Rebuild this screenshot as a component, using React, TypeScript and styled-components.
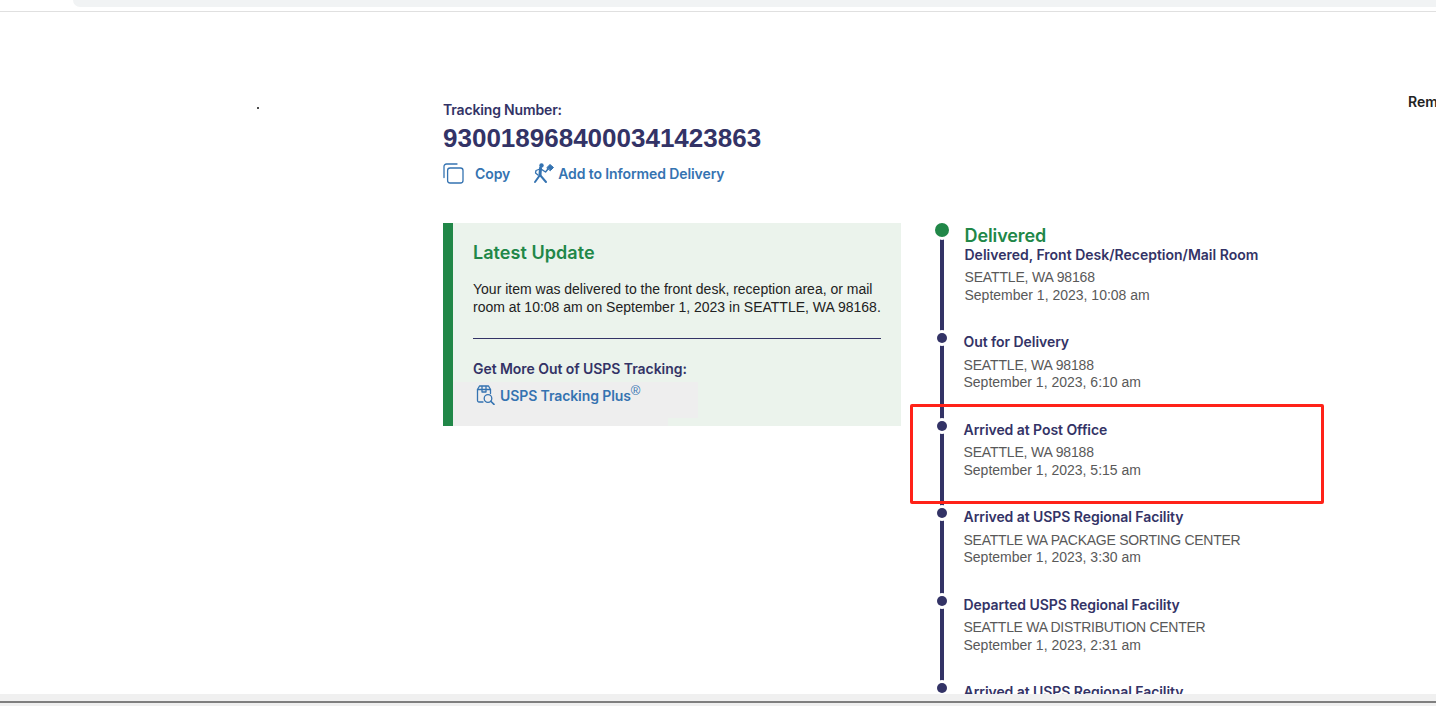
import React from "react";
import styled, { createGlobalStyle } from "styled-components";

const Global = createGlobalStyle`
  html, body { margin: 0; padding: 0; background: #fff; }
  #root { height: 706px; }
`;

const Page = styled.div`
  position: relative;
  width: 1436px;
  height: 706px;
  overflow: hidden;
  background: #fff;
  font-family: "Liberation Sans", Arial, sans-serif;
  color: #333366;
`;

const BrowserStrip = styled.div`
  height: 11px;
  border-bottom: 1px solid #e0e0e0;
  padding-left: 73px;
`;

const AddressBar = styled.div`
  height: 7px;
  background: #f1f3f4;
  border-bottom-left-radius: 12px;
`;

const Content = styled.main`
  display: flex;
  padding: 90px 0 0 443px;
`;

const Column = styled.div`
  width: 458px;
  flex: none;
`;

const Label = styled.div`
  font-family: Inter, sans-serif;
  font-size: 14px;
  font-weight: 600;
  line-height: 16px;
  letter-spacing: -0.16px;
`;

const TrackingNumber = styled.h1`
  margin: 5px 0 0;
  font-family: "Liberation Sans", sans-serif;
  font-size: 26px;
  line-height: 30px;
  font-weight: 700;
`;

const Actions = styled.div`
  display: flex;
  align-items: center;
  margin-top: 8px;
  height: 24px;
`;

const ActionLink = styled.a<{ $gap: number; $mr?: number }>`
  display: flex;
  align-items: center;
  gap: ${(p) => p.$gap}px;
  margin-right: ${(p) => p.$mr ?? 0}px;
  font-family: Inter, sans-serif;
  font-size: 14px;
  font-weight: 600;
  color: #3573b1;
  letter-spacing: -0.1px;
`;

const Update = styled.section`
  margin-top: 38px;
  height: 203px;
  box-sizing: border-box;
  background: #ebf3ec;
  border-left: 10px solid #218748;
  padding: 18px 20px 0 20px;
`;

const UpdateTitle = styled.h2`
  margin: 0;
  font-family: Inter, sans-serif;
  font-size: 18px;
  line-height: 24px;
  font-weight: 600;
  color: #218748;
  letter-spacing: 0.05px;
`;

const UpdateText = styled.p`
  margin: 15px 0 0;
  font-size: 14px;
  line-height: 18px;
  color: #222;
`;

const Rule = styled.hr`
  margin: 22px 0 0;
  border: 0;
  border-top: 1px solid #333366;
`;

const MoreLabel = styled(Label)`
  margin-top: 21px;
  line-height: 18px;
  letter-spacing: -0.06px;
`;

const PlusBox = styled.div`
  position: relative;
  display: flex;
  align-items: flex-start;
  gap: 4px;
  margin: 4px 0 0 -20px;
  padding: 3px 0 0 23px;
  width: 222px;
  height: 33px;
  background: #eeeeee;
  &::after {
    content: "";
    position: absolute;
    left: 0;
    top: 36px;
    width: 215px;
    height: 8px;
    background: #eeeeee;
  }
`;

const PlusLink = styled(ActionLink)`
  line-height: 20px;
  margin-top: 1px;
  sup {
    font-family: "Liberation Sans", sans-serif;
    font-size: 13px;
    font-weight: 400;
    line-height: 0;
  }
`;

const Timeline = styled.div`
  width: 390px;
  margin: 121px 0 0 32.5px;
  flex: none;
`;

const Step = styled.div<{ $h: number; $first?: boolean }>`
  position: relative;
  height: ${(p) => p.$h}px;
  box-sizing: border-box;
  padding-left: ${(p) => (p.$first ? 31 : 30)}px;
  padding-top: ${(p) => (p.$first ? 2 : 0)}px;
  &::before {
    content: "";
    position: absolute;
    left: 6.5px;
    top: 0;
    bottom: 0;
    width: 4px;
    background: #333366;
  }
`;

const Dot = styled.span<{ $big?: boolean }>`
  position: absolute;
  left: ${(p) => (p.$big ? 1.5 : 3.5)}px;
  top: 0;
  width: ${(p) => (p.$big ? 14 : 10)}px;
  height: ${(p) => (p.$big ? 14 : 10)}px;
  border-radius: 50%;
  background: ${(p) => (p.$big ? "#218748" : "#333366")};
  box-shadow: 0 0 0 3px #fff;
`;

const Status = styled.div`
  font-family: Inter, sans-serif;
  font-size: 18px;
  line-height: 22px;
  font-weight: 600;
  color: #218748;
  letter-spacing: -0.1px;
`;

const StepTitle = styled.div<{ $mt?: number; $ls?: number }>`
  font-family: Inter, sans-serif;
  font-size: 14px;
  font-weight: 600;
  line-height: 18px;
  letter-spacing: ${(p) => p.$ls ?? -0.06}px;
  margin-top: ${(p) => p.$mt ?? 0}px;
`;

const Detail = styled.div<{ $mt?: number; $ls?: number }>`
  font-size: 14px;
  line-height: 18px;
  color: #595959;
  margin-top: ${(p) => p.$mt ?? 0}px;
  letter-spacing: ${(p) => p.$ls ?? 0}px;
`;

const Cut = styled.div`
  position: absolute;
  left: 1408px;
  top: 93px;
  font-family: Inter, sans-serif;
  font-size: 14px;
  font-weight: 600;
  line-height: 18px;
  color: #222;
`;

const Speck = styled.span`
  position: absolute;
  left: 257px;
  top: 107px;
  width: 2px;
  height: 2px;
  border-radius: 50%;
  background: #111;
`;

const RedBox = styled.div`
  position: absolute;
  left: 910px;
  top: 404px;
  width: 414px;
  height: 100px;
  box-sizing: border-box;
  border: 3px solid #ff2218;
  border-radius: 2px;
`;

const BottomBar = styled.div`
  position: absolute;
  left: 0;
  right: 0;
  bottom: 0;
  height: 12px;
  background: #f0f0f0;
  &::after {
    content: "";
    position: absolute;
    left: 0;
    right: 0;
    top: 7px;
    height: 2px;
    background: #7f7f7f;
  }
`;

const CopyIcon = () => (
  <svg width="21" height="21" viewBox="0 0 21 21" fill="none" stroke="#3573b1" strokeWidth="1.3">
    <path d="M1 14.5 V3.5 a2.5 2.5 0 0 1 2.5-2.5 H14" strokeLinecap="round" />
    <rect x="4.6" y="5" width="15.4" height="15" rx="2.5" />
  </svg>
);

const RunnerIcon = () => (
  <svg width="21" height="21" viewBox="0 0 21 21" fill="none" stroke="#3573b1" strokeLinecap="round" strokeLinejoin="round">
    <circle cx="8.5" cy="2.4" r="2.2" fill="#3573b1" stroke="none" />
    <path d="M7.5 5 L7 12" strokeWidth="3" />
    <path d="M7 12 L2 19 M7 12 L13 19" strokeWidth="2" />
    <path d="M7 6 L3 7.5 L2.5 10 L5 12" strokeWidth="1.3" />
    <path d="M8 6 L12.5 9 L15 6" strokeWidth="1.5" />
    <path d="M14 4.5 L17 1.5 L20.5 4.5 L17.5 7.5 Z" fill="#3573b1" strokeWidth="1" />
  </svg>
);

const PlusIcon = () => (
  <svg width="20" height="20" viewBox="0 0 20 20" fill="none" stroke="#3573b1" strokeWidth="1.3" strokeLinecap="round" strokeLinejoin="round">
    <path d="M7 17 H3 a1.5 1.5 0 0 1-1.5-1.5 V4.5 L3.5 1 H12.5 L14.5 4.5 V8.5" />
    <path d="M1.5 4.5 H14.5 M6 1.5 V7 H10 V1.5" />
    <circle cx="12" cy="13.5" r="3.8" />
    <path d="M14.8 16.3 L18 19.4" strokeWidth="1.6" />
  </svg>
);

type StepData = { h: number; title: string; a?: string; b?: string; mt?: number; bmt?: number; ls?: number };

const steps: StepData[] = [
  { h: 88, title: "Out for Delivery", a: "SEATTLE, WA 98188", b: "September 1, 2023, 6:10 am", mt: 5, bmt: -1, ls: -0.16 },
  { h: 87, title: "Arrived at Post Office", a: "SEATTLE, WA 98188", b: "September 1, 2023, 5:15 am", mt: 4, ls: -0.16 },
  { h: 88, title: "Arrived at USPS Regional Facility", a: "SEATTLE WA PACKAGE SORTING CENTER", b: "September 1, 2023, 3:30 am", mt: 5, bmt: -1, ls: -0.27 },
  { h: 87, title: "Departed USPS Regional Facility", a: "SEATTLE WA DISTRIBUTION CENTER", b: "September 1, 2023, 2:31 am", mt: 4, ls: -0.29 },
  { h: 40, title: "Arrived at USPS Regional Facility" },
];

export default function App() {
  return (
    <Page>
      <Global />
      <BrowserStrip>
        <AddressBar />
      </BrowserStrip>
      <Content>
        <Column>
          <Label>Tracking Number:</Label>
          <TrackingNumber>9300189684000341423863</TrackingNumber>
          <Actions>
            <ActionLink $gap={11} $mr={23}>
              <CopyIcon />
              Copy
            </ActionLink>
            <ActionLink $gap={4}>
              <RunnerIcon />
              Add to Informed Delivery
            </ActionLink>
          </Actions>
          <Update>
            <UpdateTitle>Latest Update</UpdateTitle>
            <UpdateText>
              Your item was delivered to the front desk, reception area, or mail room at 10:08 am on
              September 1, 2023 in SEATTLE, WA 98168.
            </UpdateText>
            <Rule />
            <MoreLabel>Get More Out of USPS Tracking:</MoreLabel>
            <PlusBox>
              <PlusIcon />
              <PlusLink $gap={0}>
                <span>
                  USPS Tracking Plus<sup>®</sup>
                </span>
              </PlusLink>
            </PlusBox>
          </Update>
        </Column>
        <Timeline>
          <Step $h={110} $first>
            <Dot $big />
            <Status>Delivered</Status>
            <StepTitle $mt={-1} $ls={0}>Delivered, Front Desk/Reception/Mail Room</StepTitle>
            <Detail $mt={4} $ls={-0.16}>SEATTLE, WA 98168</Detail>
            <Detail>September 1, 2023, 10:08 am</Detail>
          </Step>
          {steps.map((s, i) => (
            <Step key={i} $h={s.h}>
              <Dot />
              <StepTitle>{s.title}</StepTitle>
              {s.a && <Detail $mt={s.mt} $ls={s.ls}>{s.a}</Detail>}
              {s.b && <Detail $mt={s.bmt}>{s.b}</Detail>}
            </Step>
          ))}
        </Timeline>
      </Content>
      <Cut>Rem</Cut>
      <Speck />
      <RedBox />
      <BottomBar />
    </Page>
  );
}
